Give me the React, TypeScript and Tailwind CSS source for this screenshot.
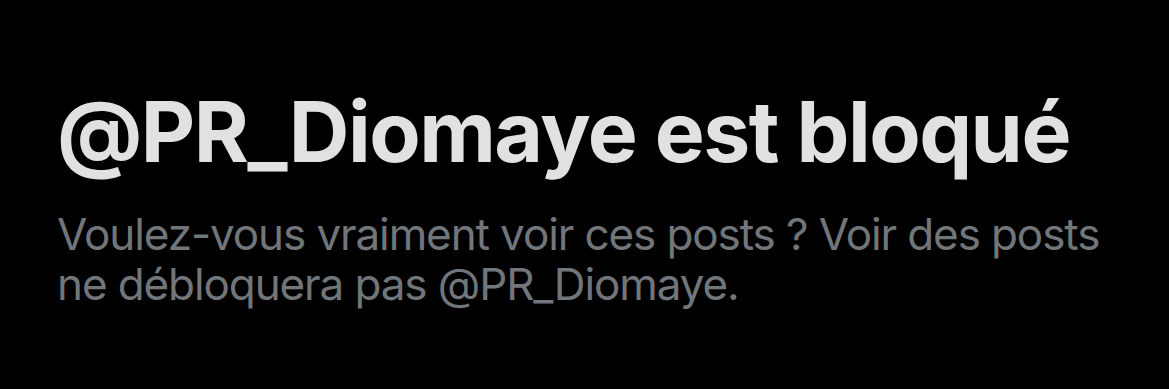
export default function App() {
  return (
    <div
      className="w-[1169px] h-[389px] bg-black overflow-hidden pl-[57px] pt-[82px]"
      style={{ fontFamily: "Inter, 'Noto Sans', sans-serif" }}
    >
      <h1 className="text-[84px] leading-[100px] font-bold tracking-[-1.5px] text-[#e1e1e1] whitespace-nowrap">
        @PR_Diomaye est bloqué
      </h1>
      <p className="mt-[27px] text-[44px] leading-[50px] tracking-[-1.1px] text-[#71767b] whitespace-nowrap">
        Voulez-vous vraiment voir ces posts ? Voir des posts
        <br />
        ne débloquera pas @PR_Diomaye.
      </p>
    </div>
  );
}
